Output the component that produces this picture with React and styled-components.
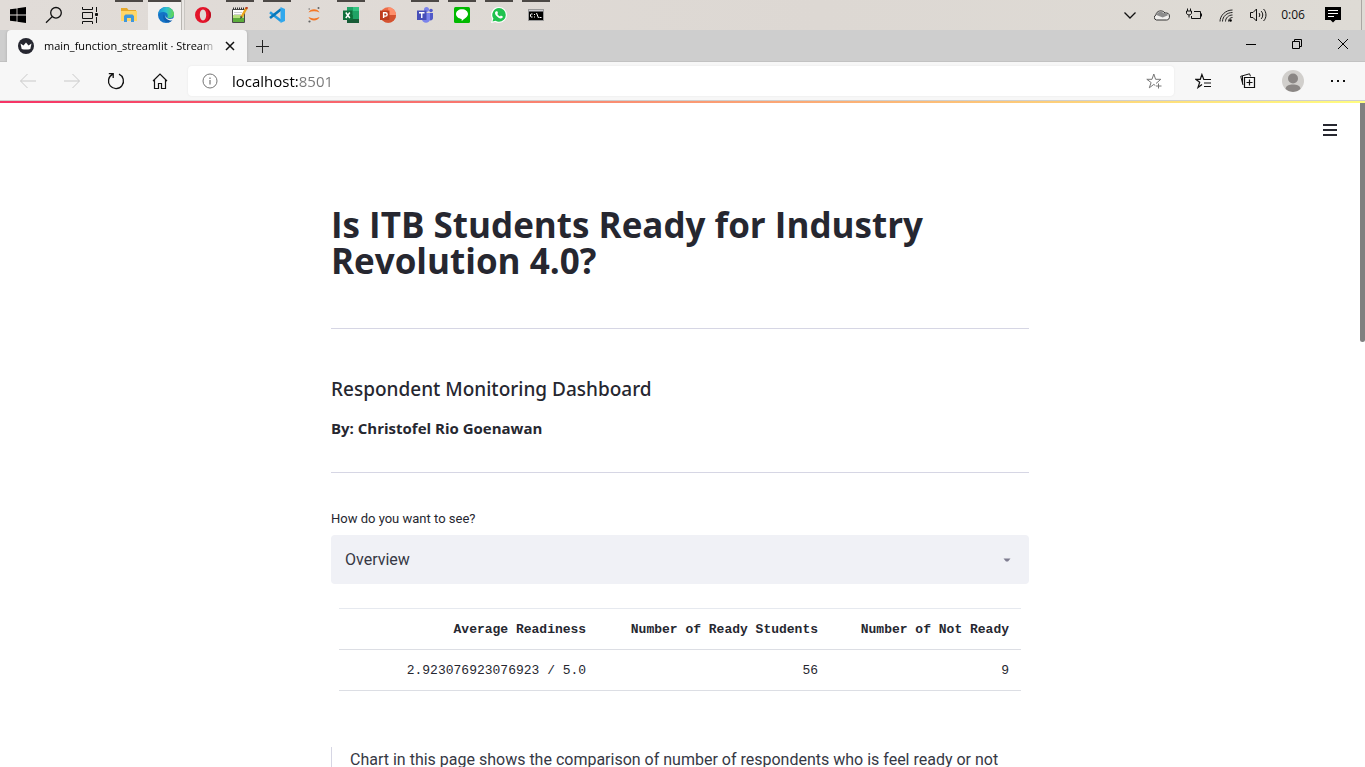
import React from 'react';
import styled, { createGlobalStyle } from 'styled-components';

const GlobalStyle = createGlobalStyle`
  * { box-sizing: border-box; }
  body { margin: 0; background: #fff; font-family: Roboto, "Open Sans", sans-serif; color: #262730; }
  button { border: 0; padding: 0; background: none; color: inherit; font: inherit; }
  svg { display: block; flex: none; }
`;

const Screen = styled.div`
  display: flex;
  flex-direction: column;
  height: 100vh;
  overflow: hidden;
`;

/* Desktop task bar */
const TaskBar = styled.header`
  display: flex;
  justify-content: space-between;
  flex: none;
  height: 30px;
  background: linear-gradient(90deg, #e1dcd8, #ddd8d3 60%, #dedbd5);
`;
const TaskGroup = styled.div`
  display: flex;
`;
const AppGroup = styled.nav`
  display: flex;
  margin-left: 3px;
`;
const SystemButton = styled.button`
  display: flex;
  align-items: center;
  justify-content: center;
  width: 36px;
  height: 30px;
`;
const TaskButton = styled.button`
  display: flex;
  align-items: center;
  justify-content: center;
  width: 37px;
  height: 30px;
  padding-right: 1px;
  background: ${p => (p.$active
    ? 'linear-gradient(90deg, #f2f0ee 33px, #b9b6b2 33px 34px, #e9e6e3 34px 36px, #c9c6c2 36px)'
    : 'none')};
  position: relative;
  &::before {
    content: "";
    position: absolute;
    top: 0;
    left: ${p => (p.$active ? 0 : 4)}px;
    right: ${p => (p.$active ? 4 : 5)}px;
    height: 2px;
    background: ${p => (p.$open ? '#4c4845' : 'transparent')};
  }
`;
const Tray = styled.div`
  display: flex;
  align-items: center;
`;
const TrayButton = styled.button`
  display: flex;
  align-items: center;
  justify-content: center;
  width: 32px;
  height: 30px;
`;
const Clock = styled.time`
  width: 38px;
  text-align: center;
  font: 12px/30px "Open Sans", sans-serif;
  color: #111;
`;
const NoticeButton = styled(TrayButton)`
  width: 42px;
  color: #000;
`;
const ShowDesktop = styled.button`
  width: 4px;
  height: 30px;
  margin-left: 7px;
  border-left: 1px solid #aaa7a3;
`;

/* Browser chrome */
const TabStrip = styled.div`
  display: flex;
  flex: none;
  height: 32px;
  padding-left: 7px;
  background: #cecece;
  box-shadow: inset 0 -1px #c2c2c2;
`;
const Tab = styled.div`
  display: flex;
  align-items: center;
  width: 240px;
  padding: 0 11px;
  background: #f7f7f7;
  border-radius: 4px 4px 0 0;
  box-shadow: 0 0 3px #aaa;
  clip-path: inset(0 -3px 0 -3px);
`;
const TabTitle = styled.span`
  flex: 1;
  margin-left: 10px;
  white-space: nowrap;
  font: 11px/16px "Open Sans", sans-serif;
  background: linear-gradient(90deg, #000 155px, #00000018 172px);
  background-clip: text;
  color: transparent;
`;
const TabClose = styled.button`
  display: flex;
  justify-content: center;
  width: 12px;
`;
const NewTab = styled.button`
  display: flex;
  align-items: center;
  justify-content: center;
  width: 31px;
`;
const WindowControls = styled.div`
  display: flex;
  margin-left: auto;
`;
const WindowButton = styled.button`
  display: flex;
  align-items: center;
  justify-content: center;
  width: 46px;
  height: 28px;
  padding-left: 2px;
`;
const Toolbar = styled.div`
  display: flex;
  align-items: center;
  flex: none;
  height: 39px;
  padding: 0 5px 0 6px;
  background: #f7f7f7;
  border-bottom: 1px solid #cfcfcf;
`;
const ToolButton = styled.button`
  display: flex;
  align-items: center;
  justify-content: center;
  width: ${p => (p.$wide ? 45 : 44)}px;
  height: 30px;
  color: ${p => (p.$muted ? '#c9c9c9' : '#111')};
`;
const AddressBar = styled.form`
  display: flex;
  align-items: center;
  flex: 1;
  height: 30px;
  margin: 0 6px;
  padding: 0 12px 0 14px;
  background: #fff;
  border-radius: 4px;
  box-shadow: 0 0 2px #e4e4e4;
  color: #767676;
`;
const AddressInput = styled.input`
  flex: 1;
  min-width: 0;
  margin-left: 14px;
  padding: 0;
  border: 0;
  outline: 0;
  font: 15px/24px "Open Sans", sans-serif;
  background: linear-gradient(90deg, #000 66px, #767676 66px);
  background-clip: text;
  -webkit-text-fill-color: transparent;
`;

/* App page */
const Rainbow = styled.div`
  flex: none;
  height: 2px;
  background: linear-gradient(90deg, #f63366, #fffd80);
`;
const Viewport = styled.div`
  display: flex;
  flex: 1;
  min-height: 0;
  position: relative;
`;
const MenuButton = styled.button`
  position: absolute;
  top: 17px;
  right: 25px;
  padding: 2px;
`;
const Scroller = styled.div`
  flex: 1;
  overflow: hidden;
`;
const ScrollThumb = styled.div`
  width: 5px;
  height: 36%;
  background: #808080;
  border-radius: 0 0 3px 3px;
`;
const Content = styled.main`
  max-width: 698px;
  margin: 0 auto;
  padding-top: 104px;
`;
const Title = styled.h1`
  margin: 0;
  font: 700 35px/36px "Open Sans", sans-serif;
`;
const Rule = styled.hr`
  height: 1px;
  margin: ${p => (p.$tight ? '32px 0 37px' : '49px 0 48px')};
  border: 0;
  background: #d6d6e4;
`;
const Subtitle = styled.h3`
  margin: 0 0 15px;
  font: 500 19px/24px "Noto Sans", sans-serif;
`;
const Author = styled.p`
  margin: 0;
  font: 700 15px/24px "Open Sans", sans-serif;
`;
const Label = styled.label`
  display: block;
  margin-bottom: 7px;
  font-size: 13px;
  line-height: 18px;
`;
const SelectBox = styled.div`
  display: grid;
  align-items: center;
  & > * { grid-area: 1 / 1; }
  & > svg { justify-self: end; margin-right: 18px; pointer-events: none; }
`;
const Select = styled.select`
  appearance: none;
  width: 100%;
  height: 49px;
  padding: 0 14px;
  border: 0;
  border-radius: 4px;
  background: #f0f1f6;
  color: #363844;
  font: 16px Roboto, sans-serif;
`;
const Table = styled.table`
  width: calc(100% - 16px);
  margin: 24px 8px 56px;
  border-collapse: collapse;
  table-layout: fixed;
  font: 13px/20px "Liberation Mono", monospace;
  border-top: 1px solid #e6e9ef;
`;
const Cell = styled.td`
  height: 41px;
  padding: 1px 12px 0;
  text-align: right;
  white-space: nowrap;
  font-weight: ${p => (p.as === 'th' ? 700 : 400)};
  border-bottom: 1px solid #dcdee4;
`;
const Col = styled.col`
  width: ${p => p.$share}%;
`;
const Quote = styled.blockquote`
  margin: 0;
  padding-left: 18px;
  border-left: 1px solid #d6d6e4;
  color: #363844;
  font-size: 16px;
  line-height: 26px;
`;

const Icon = ({ size = 16, box = size, children, ...rest }) => (
  <svg width={size} height={size} viewBox={`0 0 ${box} ${box}`} fill="none" aria-hidden="true" {...rest}>{children}</svg>
);
const Line = props => <Icon stroke="currentColor" {...props} />;

const systemItems = [
  ['Start', <Icon><path fill="#000" d="M0 2.3 6.6 1.4v6.2H0zM7.4 1.3 16 0v7.6H7.4zM0 8.4h6.6v6.2L0 13.7zM7.4 8.4H16V16l-8.6-1.3z" /></Icon>],
  ['Search', <Line size={18} stroke="#111" strokeWidth="1.3"><circle cx="11" cy="6.8" r="5.3" /><path d="M7.2 10.6 1 16.8" /></Line>],
  ['Task View', <Line size={18} stroke="#111"><path d="M1.5 1v2.5h10V1M1.5 6.5h10v6h-10zM1.5 18v-2.5h10V18M15.5 1v5M15.5 11v6" /><path fill="#111" d="M14.5 7.5h2v2h-2z" /></Line>],
];

const appItems = [
  ['File Explorer', true, <Icon><path fill="#e6a92b" d="M0 1h6l1.5 2H15v3H0z" /><path fill="#ffd667" d="M0 4h16v10H0z" /><path fill="#3f97dc" d="M3 15V9l1.5-1.500h7L13 9v6h-3v-4H6v4z" /></Icon>],
  ['Edge', true, <Icon><defs><linearGradient id="edgeGreen" x1="0" y1="4" x2="16" y2="6" gradientUnits="userSpaceOnUse"><stop stopColor="#168fd8" /><stop offset=".5" stopColor="#2fc3cf" /><stop offset="1" stopColor="#62d84e" /></linearGradient></defs><circle cx="8" cy="8" r="8" fill="#1473c5" /><path fill="url(#edgeGreen)" d="M.1 7.5C.6 3.2 4 0 8.2 0 12.8 0 16 3.500 16 7c0 2.600-1.800 4.200-4.100 4.200-2 0-2.900-.7-2.500-1.300.8-1.100.5-4.700-3.900-4.900C3 4.900.8 6.100.1 7.500z" /><path fill="#0f5fb0" d="M5.800 7.300C4 11 6.500 15.500 10.500 15.600c2-.5 3.700-1.900 4.500-3.500-3.500 1.800-7.900.5-9.200-4.800z" /><path fill="#f2f0ee" d="M7.400 8c-.2 3 3.500 4.900 7.500 3.500.5-.1 1.100-.2 1.100-.5v2.200c-1.200.4-2.700.6-4 .2-3-.6-5.200-2.800-4.600-5.400z" /></Icon>],
  ['Opera', false, <Icon><path fill="#e3152b" fillRule="evenodd" d="M8 0a8 8 0 1 0 0 16A8 8 0 0 0 8 0zm0 2.600c2 0 3.200 2.400 3.200 5.400S10 13.400 8 13.400 4.800 11 4.800 8 6 2.600 8 2.600z" /><path fill="#b80f22" d="M11 1.500c4 2.500 4 10.500 0 13 3-.9 5-3.300 5-6.500s-2-5.600-5-6.500z" /></Icon>],
  ['Notepad++', true, <Icon><path fill="#fff" stroke="#484848" d="M.5 2.5h12v13H.5z" /><path stroke="#333" strokeDasharray="1 1" d="M1 1.5h11" strokeWidth="2" /><path fill="#5cad3b" d="M1 11h11v4H1z" /><path fill="#b9df80" d="M1 8h11v3H1z" /><path stroke="#ccc" d="M2 5.5h8M2 7.5h7" /><path stroke="#e9a51d" strokeWidth="2.4" d="m14.500 1-5 9" /><path stroke="#bc3d20" strokeWidth="2.4" d="m15 0-1 2" /><path fill="#333" d="m8.500 9 2 1-2.200 2z" /></Icon>],
  ['Visual Studio Code', true, <Icon><path stroke="#239be2" strokeWidth="2.6" d="M12 14 1 5.200" /><path stroke="#0877b9" strokeWidth="2.6" d="M12 2.200 1 11" /><path fill="#31a8ed" d="M11.500 0 16 2v12l-4.500 2z" /></Icon>],
  ['Jupyter', false, <Icon><path fill="#f37726" d="M2.500 5.500C4 1 12 1 13.500 5.500 10 3.800 6 3.800 2.500 5.500zM2.500 10c3.500 1.900 7.500 1.900 11 0C12 14.500 4 14.500 2.500 10z" /><circle cx="3.2" cy="2" r=".8" fill="#767677" /><circle cx="12.5" cy="1" r="1" fill="#616262" /><circle cx="3.5" cy="14.5" r="1.1" fill="#616262" /></Icon>],
  ['Excel', true, <Icon><path fill="#21a366" d="M4 0h12v16H4z" /><path fill="#33c481" d="M10 0h6v4h-6z" /><path fill="#107c41" d="M4 8h6v4H4z" /><path fill="#185c37" d="M4 12h12v4H4z" /><path fill="#0f703b" d="M0 3.500h9.500V13H0z" /><path stroke="#fff" strokeWidth="1.5" d="m2.800 5.500 4 5.500M6.800 5.500l-4 5.500" /></Icon>],
  ['PowerPoint', false, <Icon><circle cx="8.2" cy="8" r="7.8" fill="#ed6c47" /><path fill="#ff8f6b" d="M8.200.2A7.800 7.800 0 0 1 16 8H8.200z" /><path fill="#d35230" d="M.4 8H16a7.800 7.800 0 0 1-15.600 0z" /><path fill="#bd3b1d" d="M0 3.500h9.500V13H0z" /><path stroke="#fff" strokeWidth="1.4" d="M3.600 11V5.800h1.900a1.600 1.600 0 0 1 0 3.300H3.600" /></Icon>],
  ['Teams', true, <Icon><circle cx="14" cy="3.5" r="1.8" fill="#5059c9" /><circle cx="9.5" cy="2.5" r="2.5" fill="#7b83eb" /><path fill="#5059c9" d="M11 6h5v5c0 3-4 3-4 1z" /><path fill="#7b83eb" d="M5 6h8v6c0 5-8 5-8 0z" /><path fill="#464eb8" d="M0 3.500h9.500V13H0z" /><path stroke="#fff" strokeWidth="1.4" d="M2 5.800h5.500M4.750 5.500V11" /></Icon>],
  ['LINE', true, <Icon><rect width="16" height="16" rx="1.5" fill="#00b900" /><path fill="#fff" d="M8 2.300c3.400 0 6 2.100 6 4.800 0 2.500-3.200 4.700-5.800 6.600-.5.300-.7 0-.6-.5l.1-1.300C4.400 11.700 2 9.700 2 7.100c0-2.700 2.600-4.800 6-4.800z" /></Icon>],
  ['WhatsApp', true, <Icon><path fill="#fff" d="M8 0a7.900 7.900 0 0 1 0 15.800 9 9 0 0 1-3.700-.9L0 16l1.200-4A7.900 7.900 0 0 1 8 0z" /><path fill="#1fc24e" d="M8 1.100a6.800 6.800 0 0 1 0 13.600 7 7 0 0 1-3.500-1l-3 .8.9-2.900A6.800 6.800 0 0 1 8 1.100z" /><path fill="#fff" d="M5.200 4.200h1.100L7 6.100l-.7 1c.7 1.300 1.500 2 2.700 2.500l.9-1 1.900.9c0 1.500-1.200 2-2.200 1.900C7 11 4 8 4 6c0-.9.600-1.500 1.200-1.800z" /></Icon>],
  ['Command Prompt', true, <Icon><path fill="#000" stroke="#999" d="M.5 2.5h15v11H.5z" /><path fill="#c9c9cf" d="M1 3h14v1.500H1z" /><path stroke="#fff" d="M4.500 7H3L2.500 7.500v2l.5.5h1.500M6.500 7v1M6.500 9.500v1M8.500 6l2 5M11.500 10.500h2" /></Icon>],
];

const trayItems = [
  ['Hidden icons', <Line><path d="m2.500 5.500 5.500 5.500 5.500-5.500" stroke="#111" strokeWidth="1.3" /></Line>],
  ['OneDrive', <Icon><path fill="#f2f0ee" stroke="#333" d="M2.500 13A2.600 2.600 0 0 1 2 8c.2-4.500 6.500-5.500 9-2 3-.3 4.500 1 4.400 3 .4 2.500-1 4-2.900 4z" /><path fill="#8c8c8c" d="M2.500 8C3.500 4 8 3.800 10 6.200c2-.5 3.500.5 3.900 2L8.700 10.500z" /></Icon>],
  ['Battery', <Line stroke="#111"><path d="M8 4.500h6.500v7h-9V9M15.500 6.500v3M1.500 1.500V4M4.500 1.500V4M.5 4v2c0 2.500 5 2.500 5 0V4zM3 8v2.500" /></Line>],
  ['Wi-Fi', <Line stroke="#222"><path d="M2 14.500C2 8.500 7.500 3 14.500 3M4.500 14.500c0-5 4.500-9 10-9M7.500 14.500c0-3.500 3-6.500 7-6.500M10.500 14.500c0-2.500 2-4 4-4" /><circle cx="12.5" cy="13.5" r="1.3" fill="#000" stroke="none" /></Line>],
  ['Volume', <Line size={18} stroke="#111"><path d="M1.500 6.500H4L7.500 3v12L4 11.500H1.500zM10 7c1 1 1 3 0 4M12 5c2.300 2 2.300 6 0 8M14.500 3c3.300 3 3.300 9 0 12" /></Line>],
];

const columns = [
  { name: 'Average Readiness', value: '2.923076923076923 / 5.0', share: 38 },
  { name: 'Number of Ready Students', value: '56', share: 34 },
  { name: 'Number of Not Ready', value: '9', share: 28 },
];

function Taskbar() {
  return (
    <TaskBar>
      <TaskGroup>
        {systemItems.map(([name, icon]) => <SystemButton key={name} aria-label={name}>{icon}</SystemButton>)}
        <AppGroup aria-label="Apps">
          {appItems.map(([name, open, icon]) => (
            <TaskButton key={name} $open={open} $active={name === 'Edge'} aria-label={name}>{icon}</TaskButton>
          ))}
        </AppGroup>
      </TaskGroup>
      <Tray>
        {trayItems.map(([name, icon]) => <TrayButton key={name} aria-label={name}>{icon}</TrayButton>)}
        <Clock>0:06</Clock>
        <NoticeButton aria-label="Notifications">
          <Icon><path fill="#000" d="M0 0h16v13h-5.500L8 15.500 5.500 13H0z" /><path stroke="#fff" d="M3 3.500h10M3 6.500h10M3 9.500h6" /></Icon>
        </NoticeButton>
        <ShowDesktop aria-label="Show desktop" />
      </Tray>
    </TaskBar>
  );
}

function Browser() {
  return (
    <>
      <TabStrip>
        <Tab>
          <Icon><circle cx="8" cy="8" r="8" fill="#262730" /><path fill="#fff" d="m2.500 5.500 3 2L8 4.500l2.500 3 3-2-1.200 5.500c-2.500.8-6.100.8-8.600 0z" /></Icon>
          <TabTitle>main_function_streamlit · Stream</TabTitle>
          <TabClose aria-label="Close tab"><Line size={10} stroke="#111" strokeWidth="1.5"><path d="m1 1 8 8M9 1 1 9" /></Line></TabClose>
        </Tab>
        <NewTab aria-label="New tab"><Line size={13} stroke="#222"><path d="M6.500 0v13M0 6.500h13" /></Line></NewTab>
        <WindowControls>
          <WindowButton aria-label="Minimize"><Line size={10} stroke="#000"><path d="M0 5.500h10" /></Line></WindowButton>
          <WindowButton aria-label="Restore"><Line size={10} stroke="#000"><path d="M.5 2.500h7v7h-7zM2.500 2V.5h7v7H8" /></Line></WindowButton>
          <WindowButton aria-label="Close"><Line size={10} stroke="#000"><path d="m0 0 10 10M10 0 0 10" /></Line></WindowButton>
        </WindowControls>
      </TabStrip>
      <Toolbar>
        <ToolButton $muted aria-label="Back"><Line><path d="M16 8H.7M7.500 1 .5 8l7 7" /></Line></ToolButton>
        <ToolButton $muted aria-label="Forward"><Line><path d="M0 8h15.300M8.500 1l7 7-7 7" /></Line></ToolButton>
        <ToolButton aria-label="Refresh"><Line size={18} strokeWidth="1.3"><path d="M12 2.200A7.500 7.500 0 1 1 5.500 2.400M1.800 1.600h4.400V6" /></Line></ToolButton>
        <ToolButton aria-label="Home"><Line strokeWidth="1.2"><path d="m1 8 7-7 7 7M2.500 7v8.500h4v-5h3v5h4V7" /></Line></ToolButton>
        <AddressBar>
          <Line><circle cx="8" cy="8" r="7" /><path d="M8 7v4.500M8 4.500V6" strokeWidth="1.2" /></Line>
          <AddressInput aria-label="Address" defaultValue="localhost:8501" />
          <Line><path d="M10 10.500 14.800 6.300H9.600L7.800 1 6 6.300H.8l4.300 3.200-1.800 5.300 4.500-3.400 1.500 1.100M12.500 10.500v5M10 13h5.500" /></Line>
        </AddressBar>
        <ToolButton $wide aria-label="Favorites"><Line><path d="M7 11.500 3 14.500l1.700-5.300L.8 6.300h4.500L6.900 1.500l1.900 5H16M9 10h7M9 13.500h7" strokeWidth="1.2" /></Line></ToolButton>
        <ToolButton $wide aria-label="Collections"><Line><path d="M4.500 4.500h10v10h-10zM9.500 6.500v6M6.500 9.500h6" strokeWidth="1.2" /><path d="M3 12 .7 3.300 9.500.8l1 2.500M2.500 10.500v-7.500" /></Line></ToolButton>
        <ToolButton $wide aria-label="Profile"><Icon size={22}><circle cx="11" cy="11" r="11" fill="#d1cfcc" /><circle cx="11" cy="8.5" r="5" fill="#8b8785" /><path fill="#8b8785" d="M3.500 19C4 15.500 7 14.500 11 14.500s7 1 7.500 4.500A11 11 0 0 1 3.500 19z" /></Icon></ToolButton>
        <ToolButton $wide aria-label="Settings and more"><Icon><path fill="#111" d="M1 7h2v2H1zM7 7h2v2H7zM13 7h2v2h-2z" /></Icon></ToolButton>
      </Toolbar>
    </>
  );
}

function Dashboard() {
  return (
    <Content>
      <Title>Is ITB Students Ready for Industry Revolution 4.0?</Title>
      <Rule />
      <Subtitle>Respondent Monitoring Dashboard</Subtitle>
      <Author>By: Christofel Rio Goenawan</Author>
      <Rule $tight />
      <Label htmlFor="view">How do you want to see?</Label>
      <SelectBox>
        <Select id="view" defaultValue="Overview"><option>Overview</option></Select>
        <Icon size={8}><path fill="#7f7d90" d="M.5 2.500h7L5 5.500H3z" /></Icon>
      </SelectBox>
      <Table>
        <colgroup>{columns.map(c => <Col key={c.name} $share={c.share} />)}</colgroup>
        <thead><tr>{columns.map(c => <Cell as="th" scope="col" key={c.name}>{c.name}</Cell>)}</tr></thead>
        <tbody><tr>{columns.map(c => <Cell key={c.name}>{c.value}</Cell>)}</tr></tbody>
      </Table>
      <Quote>Chart in this page shows the comparison of number of respondents who is feel ready or not</Quote>
    </Content>
  );
}

export default function App() {
  return (
    <Screen>
      <GlobalStyle />
      <Taskbar />
      <Browser />
      <Rainbow />
      <Viewport>
        <Scroller><Dashboard /></Scroller>
        <ScrollThumb />
        <MenuButton aria-label="Main menu"><Line stroke="#262730" strokeWidth="2"><path d="M1 3h14M1 8h14M1 13h14" /></Line></MenuButton>
      </Viewport>
    </Screen>
  );
}
